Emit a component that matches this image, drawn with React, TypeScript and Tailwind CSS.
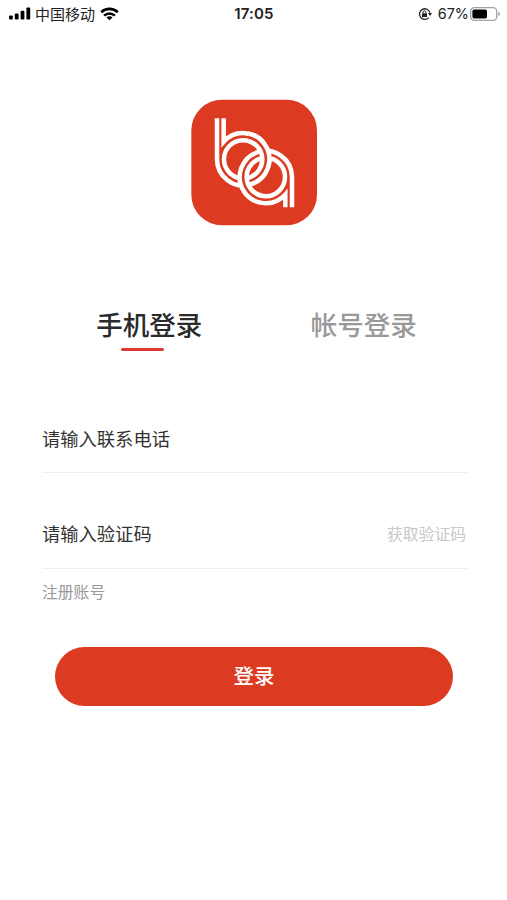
import { useState } from 'react';

const TABS = ['手机登录', '帐号登录'];

function StatusBar() {
  return (
    <header className="flex h-[27px] items-center justify-between pl-[9px] pr-[6px] text-[15px] leading-none text-[#222]">
      <div className="flex w-[198px] items-center">
        <svg width="22" height="13" viewBox="0 0 22 13" fill="#000">
          <rect x="0" y="8.6" width="3.8" height="4" rx="1" />
          <rect x="5.8" y="6.6" width="3.8" height="6" rx="1" />
          <rect x="11.6" y="3.8" width="3.8" height="8.8" rx="1" />
          <rect x="17.4" y="0.6" width="3.8" height="12" rx="1" />
        </svg>
        <span className="ml-[4px]">中国移动</span>
        <svg className="ml-[5px]" width="19" height="14" viewBox="0 0 19 14" fill="none" stroke="#000" strokeWidth="2.6">
          <path d="M1.2 5.2C5.8 0.8 13.2 0.8 17.8 5.2" />
          <path d="M4.1 8.6C7.2 5.7 11.8 5.7 14.9 8.6" />
          <path d="M9.5 13.3L6.5 10.4C8.2 9 10.8 9 12.5 10.4Z" fill="#000" stroke="none" />
        </svg>
      </div>
      <span className="font-['Inter','Liberation_Sans',sans-serif] text-[15px] font-semibold tracking-[0.15px]">17:05</span>
      <div className="flex w-[200px] items-center justify-end">
        <svg width="14" height="14" viewBox="0 0 14 14" fill="none" stroke="#222">
          <path d="M10.8 10.6A5.3 5.3 0 1 1 11.9 5.6" strokeWidth="1.3" />
          <path d="M9.9 6H14L12.1 9Z" fill="#222" stroke="none" />
          <rect x="4" y="6.2" width="5" height="3.8" rx="0.6" fill="#222" stroke="none" />
          <path d="M5.1 6.5V5.2a1.4 1.4 0 0 1 2.8 0V6.5" strokeWidth="1" />
        </svg>
        <span className="ml-[6px] pt-[2px] font-['Inter','Liberation_Sans',sans-serif] text-[14.4px]">67%</span>
        <svg className="ml-[1px]" width="31" height="14" viewBox="0 0 31 14">
          <rect x="0.7" y="0.7" width="26" height="12.6" rx="3.6" fill="none" stroke="#a3a3a3" strokeWidth="1.3" />
          <rect x="2.4" y="2.4" width="14.6" height="9.2" rx="1.8" fill="#000" />
          <path d="M28.2 4.8C30.4 5.6 30.4 8.4 28.2 9.2Z" fill="#a3a3a3" />
        </svg>
      </div>
    </header>
  );
}

function LetterB() {
  return (
    <g>
      <circle cx="159.5" cy="184" r="68" stroke="#dc3b21" strokeWidth="20" />
      <path d="M81 61V184A78.5 78.5 0 1 0 101 131.5V61" />
      <circle cx="159.5" cy="184" r="57.5" />
    </g>
  );
}

function Logo() {
  return (
    <svg className="mx-auto mt-[71px] block" width="128" height="128" viewBox="0 0 384 384">
      <defs>
        <clipPath id="upper-link">
          <rect x="175" y="95" width="130" height="115" />
        </clipPath>
      </defs>
      <rect x="4" y="5" width="377" height="377" rx="92" fill="#dc3b21" />
      <g fill="none" stroke="#fff" strokeWidth="13.5">
        <LetterB />
        <circle cx="227.5" cy="237" r="68" stroke="#dc3b21" strokeWidth="20" />
        <path d="M306 328V237A78.5 78.5 0 1 0 286 289.5V328" />
        <circle cx="227.5" cy="237" r="57.5" />
        {/* the b passes back over the a, so the rings look linked */}
        <g clipPath="url(#upper-link)">
          <LetterB />
        </g>
      </g>
    </svg>
  );
}

export default function App() {
  const [activeTab, setActiveTab] = useState(0);

  return (
    <div className="h-[900px] w-[507px] overflow-hidden bg-white font-['Noto_Sans_CJK_SC',sans-serif] text-[#333]">
      <StatusBar />
      <main>
        <Logo />
        <nav className="mt-[78px] flex pl-[42px] pr-[36px]">
          {TABS.map((tab, i) => (
            <button
              key={tab}
              onClick={() => setActiveTab(i)}
              className={`flex w-1/2 flex-col items-center text-[26.5px] leading-10 font-medium ${i === activeTab ? 'text-[#2b2b2b]' : 'text-[#999]'}`}
            >
              {tab}
              <span className={`mt-1 mr-[14px] h-[3px] w-[43px] rounded-full ${i === activeTab ? 'bg-[#dc3b32]' : ''}`} />
            </button>
          ))}
        </nav>
        <form className="pl-[42px] pr-[40px]" onSubmit={e => e.preventDefault()}>
          <div className="mt-[52px] flex h-[70px] items-center border-b border-[#eee] pt-[2px] text-[18.3px]">
            请输入联系电话
          </div>
          <div className="mt-[25px] flex h-[71px] items-center justify-between border-b border-[#eee] pt-[2px] text-[18.3px]">
            <span>请输入验证码</span>
            <button type="button" className="mr-[1px] text-[15.8px] text-[#c8c8c8]">获取验证码</button>
          </div>
          <a className="mt-[11px] block text-[15.8px] leading-6 text-[#999]">注册账号</a>
          <button className="mt-[43px] ml-[13px] h-[59px] w-[398px] rounded-full bg-[#dc3b21] pb-[2px] text-[20.5px] font-medium text-white">
            登录
          </button>
        </form>
      </main>
    </div>
  );
}
